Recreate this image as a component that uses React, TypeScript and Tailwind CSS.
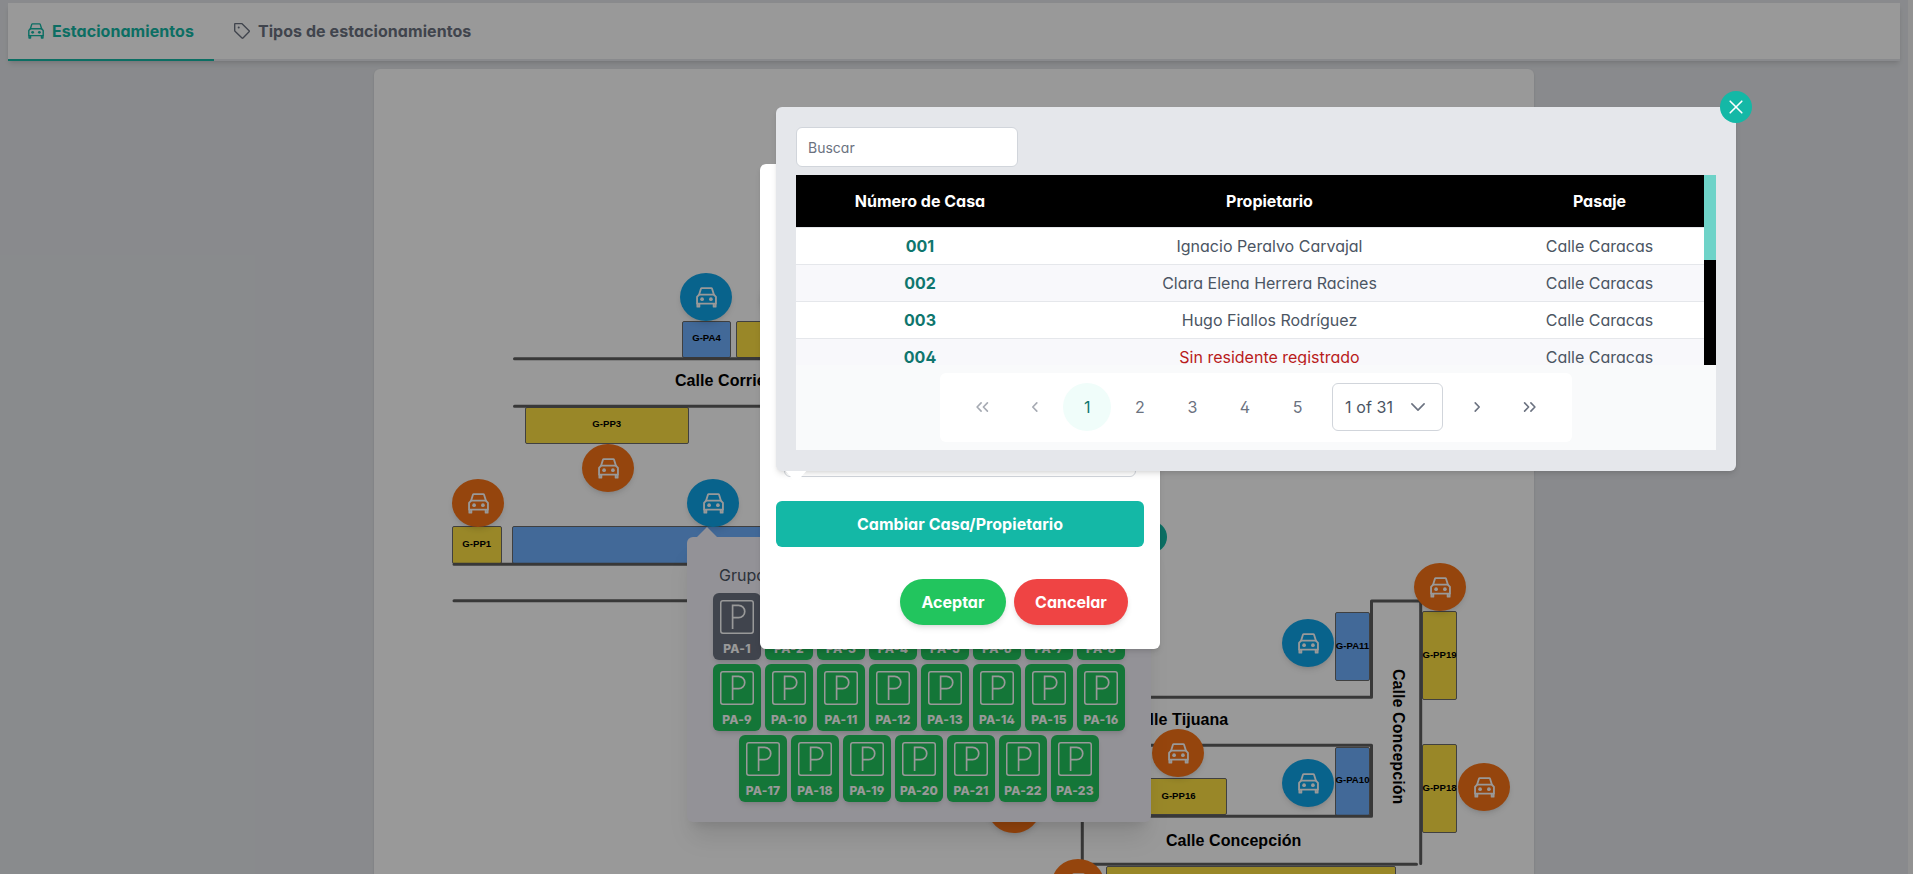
import React from "react";

const interVar = "font-['Inter',sans-serif] [font-feature-settings:'cv02','cv03','cv04','cv11']";

function CarIcon({ className }: { className: string }) {
  return (
    <svg viewBox="0 0 20 20" className={className} fill="none" stroke="currentColor" strokeWidth="1.75" strokeLinejoin="round" strokeLinecap="round">
      <path d="M3 7.2 4.7 1.7Q4.9 1.1 5.5 1.1h9q.6 0 .8.6L17 7.2" />
      <path d="M3 7.2h14L19 9.4v6.4H1V9.4Z" />
      <path d="M1.3 16v2.7h1.9V16M16.8 16v2.7h1.9V16" />
      <circle cx="5.8" cy="11.6" r="1.75" fill="currentColor" stroke="none" />
      <circle cx="14.2" cy="11.6" r="1.75" fill="currentColor" stroke="none" />
    </svg>
  );
}

function TagIcon() {
  return (
    <svg viewBox="0 0 16 16" className="size-4" fill="none" stroke="currentColor" strokeWidth="1.35" strokeLinejoin="round">
      <path d="M.7 1.1Q.7.6 1.2.6H7.6Q8 .6 8.3.9L15.1 7.7Q15.6 8.2 15.1 8.7L9 15Q8.5 15.5 8 15L1 8.2Q.7 7.9.7 7.5Z" />
      <circle cx="4.7" cy="4.5" r="1" fill="currentColor" stroke="none" />
    </svg>
  );
}

function ParkingIcon() {
  return (
    <svg viewBox="0 0 34 34" className="size-[34px]" fill="none" stroke="currentColor" strokeWidth="1.5">
      <rect x="0.75" y="0.75" width="32.5" height="32.5" rx="2.2" />
      <path d="M12.6 29V5.4h6a6 6 0 0 1 0 12.3h-6" strokeWidth="1.7" />
    </svg>
  );
}

function Chevron({ double = false, left = false }: { double?: boolean; left?: boolean }) {
  return (
    <svg viewBox="0 0 14 14" className={left ? "size-3.5 rotate-180" : "size-3.5"} fill="none" stroke="currentColor" strokeWidth="1.6" strokeLinecap="round" strokeLinejoin="round">
      {double ? <path d="M1.6 2.9 5.6 7l-4 4.1M7.9 2.9 11.9 7l-4 4.1" /> : <path d="M5.2 2.9 9.2 7l-4 4.1" />}
    </svg>
  );
}

const markers: { place: string; tone: string }[] = [
  { place: "left-[306px] top-[204px]", tone: "bg-[#0ea5e9]" },
  { place: "left-[386px] top-[204px]", tone: "bg-[#f97316]" },
  { place: "left-[208px] top-[375px]", tone: "bg-[#f97316]" },
  { place: "left-[78px] top-[410px]", tone: "bg-[#f97316]" },
  { place: "left-[313px] top-[410px]", tone: "bg-[#0ea5e9]" },
  { place: "left-[1040px] top-[494px]", tone: "bg-[#f97316]" },
  { place: "left-[908px] top-[550px]", tone: "bg-[#0ea5e9]" },
  { place: "left-[778px] top-[660px]", tone: "bg-[#f97316]" },
  { place: "left-[908px] top-[690px]", tone: "bg-[#0ea5e9]" },
  { place: "left-[1084px] top-[694px]", tone: "bg-[#f97316]" },
  { place: "left-[614px] top-[716px]", tone: "bg-[#f97316]" },
  { place: "left-[678px] top-[790px]", tone: "bg-[#f97316]" },
];

const zones: { label: string; place: string; tone: string }[] = [
  { label: "G-PA4", place: "left-[308px] top-[251.5px] w-[49px] h-[37px]", tone: "bg-[#6eaffd]" },
  { label: "", place: "left-[362px] top-[251.5px] w-[110px] h-[37px]", tone: "bg-[#ffe244]" },
  { label: "G-PP3", place: "left-[150.5px] top-[337.5px] w-[164.5px] h-[37px]", tone: "bg-[#ffe244]" },
  { label: "G-PP1", place: "left-[78px] top-[457px] w-[49.5px] h-[37.5px]", tone: "bg-[#ffe244]" },
  { label: "", place: "left-[138px] top-[457px] w-[370px] h-[37.5px]", tone: "bg-[#6eaffd]" },
  { label: "G-PA11", place: "left-[961px] top-[543px] w-[35px] h-[69px]", tone: "bg-[#6eaffd]" },
  { label: "G-PP19", place: "left-[1048px] top-[542px] w-[35px] h-[89px]", tone: "bg-[#ffe244]" },
  { label: "G-PP16", place: "left-[756px] top-[709px] w-[97px] h-[37px]", tone: "bg-[#ffe244]" },
  { label: "G-PA10", place: "left-[961px] top-[677.5px] w-[35px] h-[69px]", tone: "bg-[#6eaffd]" },
  { label: "G-PP18", place: "left-[1048px] top-[675px] w-[35px] h-[89px]", tone: "bg-[#ffe244]" },
  { label: "", place: "left-[732px] top-[797px] w-[290px] h-[37px]", tone: "bg-[#ffe244]" },
];

const streets: { name: string; place: string }[] = [
  { name: "Calle Corrientes", place: "left-[301px] top-[301px]" },
  { name: "Calle Tijuana", place: "left-[755px] top-[640px]" },
  { name: "Calle Concepción", place: "left-[792px] top-[761px]" },
  { name: "Calle Concepción", place: "left-[1013px] top-[600px] [writing-mode:vertical-rl]" },
];

function Slot({ n }: { n: number }) {
  return (
    <div className={`flex h-[67px] w-12 flex-col items-center rounded-md pt-[6.5px] text-white shadow-md ${n === 1 ? "bg-[#6b7280]" : "bg-[#22c55e]"}`}>
      <ParkingIcon />
      <span className="mt-[7px] text-[12px] leading-4 font-extrabold tracking-[0.2px] whitespace-nowrap">PA-{n}</span>
    </div>
  );
}

function SlotRow({ from, count }: { from: number; count: number }) {
  return (
    <div className="flex justify-center gap-1">
      {Array.from({ length: count }, (_, i) => (
        <Slot key={i} n={from + i} />
      ))}
    </div>
  );
}

function GroupPanel() {
  return (
    <div className="absolute left-[313px] top-[468px] h-[285px] w-[464px] rounded-md bg-[#f6f4fc] px-[26px] shadow-xl">
      <span className="absolute -top-2.5 left-2.5 size-0 border-x-10 border-b-10 border-x-transparent border-b-[#f6f4fc]" />
      <p className="mt-[26px] ml-1.5 h-[30px] text-base leading-6 text-[#4b5563]">Grupo G-PA1</p>
      <div className="flex flex-col gap-1">
        <SlotRow from={1} count={8} />
        <SlotRow from={9} count={8} />
        <SlotRow from={17} count={7} />
      </div>
      <CloseButton />
    </div>
  );
}

function CloseButton() {
  return (
    <button className="absolute -top-4 -right-4 flex size-8 items-center justify-center rounded-full bg-[#14b8a6] text-white">
      <svg viewBox="0 0 14 14" className="size-3.5" stroke="currentColor" strokeWidth="1.6" strokeLinecap="round">
        <path d="M1.2 1.2 12.8 12.8M12.8 1.2 1.2 12.8" />
      </svg>
    </button>
  );
}

function ParkingMap() {
  return (
    <div className="relative mx-auto mt-2 h-[860px] w-[1160px] rounded-md bg-white shadow-sm">
      {zones.map((z, i) => (
        <div key={i} className={`absolute flex items-center justify-center rounded-[2px] border border-[#6b6b6b] pb-[1.5px] font-['Liberation_Sans',sans-serif] text-[9.6px] leading-none font-bold whitespace-nowrap text-black ${z.place} ${z.tone}`}>
          {z.label}
        </div>
      ))}
      <svg className="absolute top-0 left-0" width="1160" height="805" fill="none" stroke="#5e5e5e" strokeWidth="3" strokeLinecap="round" strokeLinejoin="round">
        <path d="M140.5 289.8H500M140.5 337.3H500M80 495.3H500M80 531.7H500" />
        <path d="M640 628.3H997.5V532H1046.7V794.5" />
        <path d="M708 676.3H997.5V747.2H708.3V795.3H1042.5" />
      </svg>
      {streets.map((s, i) => (
        <span key={i} className={`absolute font-['Liberation_Sans',sans-serif] text-base leading-[22px] font-bold tracking-[0.07px] whitespace-nowrap text-black ${s.place}`}>
          {s.name}
        </span>
      ))}
      {markers.map((m, i) => (
        <div key={i} className={`absolute flex h-12 w-[52px] items-center justify-center rounded-[50%] text-white shadow-md ${m.place} ${m.tone}`}>
          <CarIcon className="mt-px size-[21px]" />
        </div>
      ))}
      <GroupPanel />
    </div>
  );
}

function EditDialog() {
  return (
    <div className="absolute top-[164px] left-[760px] flex h-[485px] w-[400px] flex-col justify-end rounded-md bg-white px-4 pb-6 shadow-md">
      <div className="mx-2 h-12 rounded-md border border-[#d1d5db]" />
      <button className="mt-6 h-[46px] rounded-md bg-[#14b8a6] text-base font-bold tracking-[0.06px] text-white">Cambiar Casa/Propietario</button>
      <div className="mt-8 flex justify-end gap-2 pr-4">
        <button className="h-[46px] w-[106px] rounded-full bg-[#22c55e] text-base font-bold text-white shadow-md">Aceptar</button>
        <button className="h-[46px] w-[114px] rounded-full bg-[#ef4444] text-base font-bold text-white shadow-md">Cancelar</button>
      </div>
    </div>
  );
}

const houses = [
  ["001", "Ignacio Peralvo Carvajal", "Calle Caracas"],
  ["002", "Clara Elena Herrera Racines", "Calle Caracas"],
  ["003", "Hugo Fiallos Rodríguez", "Calle Caracas"],
  ["004", "Sin residente registrado", "Calle Caracas"],
];

function Paginator() {
  const button = "flex size-12 items-center justify-center rounded-full";
  return (
    <div className="mx-auto mt-2 flex h-[69px] w-[632px] items-center rounded-md bg-white pb-px pl-[18px] text-base text-[#6b7280]">
      <div className="flex gap-[4.6px]">
        <span className={`${button} opacity-60`}><Chevron double left /></span>
        <span className={`${button} opacity-60`}><Chevron left /></span>
        <span className={`${button} bg-[#f0fdfa] text-[#0f766e]`}>1</span>
        <span className={button}>2</span>
        <span className={button}>3</span>
        <span className={button}>4</span>
        <span className={button}>5</span>
      </div>
      <div className="ml-[10.5px] flex h-12 w-[111px] items-center justify-between rounded-md border border-[#d1d5db] pr-[17px] pl-3 text-[#4b5563]">
        <span className="pb-px tracking-[0.1px] whitespace-nowrap">1 of 31</span>
        <svg viewBox="0 0 14 14" className="size-3.5 text-[#6b7280]" fill="none" stroke="currentColor" strokeWidth="1.6" strokeLinecap="round" strokeLinejoin="round">
          <path d="M.9 3.9 7 10.1l6.1-6.2" />
        </svg>
      </div>
      <div className="ml-2.5 flex gap-[4.6px]">
        <span className={button}><Chevron /></span>
        <span className={button}><Chevron double /></span>
      </div>
    </div>
  );
}

function HousePicker() {
  const columns = "grid grid-cols-[248px_451px_209px] text-center";
  return (
    <div className="absolute top-[107px] left-[776px] h-[364px] w-[960px] rounded-md bg-[#e5e7eb] p-5 shadow-md">
      <span className="absolute top-[362px] left-2 size-0 border-x-12 border-t-14 border-x-transparent border-t-white [clip-path:inset(2px_0_0_0)]" />
      <CloseButton />
      <input placeholder="Buscar" className="block h-10 w-[222px] rounded-md border border-[#d1d5db] bg-white px-[11px] pt-px text-sm placeholder:text-[#6b7280]" />
      <div className="mt-2 flex h-[190px] overflow-hidden">
        <div className="w-[908px]">
          <div className={`${columns} h-[53px] items-center border-b border-[#e5e7eb] bg-black text-base font-bold text-white`}>
            <span>Número de Casa</span>
            <span>Propietario</span>
            <span>Pasaje</span>
          </div>
          {houses.map(([num, owner, street], i) => (
            <div key={num} className={`${columns} h-[37px] items-center border-b border-[#e5e7eb] text-base text-[#4b5563] ${i % 2 ? "bg-[#f8f8fb]" : "bg-white"}`}>
              <span className="font-bold text-[#0f766e]">{num}</span>
              <span className={i === 3 ? "text-[#b91c1c]" : ""}>{owner}</span>
              <span>{street}</span>
            </div>
          ))}
        </div>
        <div className="w-3 bg-black">
          <div className="h-[85px] bg-[#6ed3c8]" />
        </div>
      </div>
      <div className="h-[85px] overflow-hidden bg-[#f9fafb]">
        <Paginator />
      </div>
    </div>
  );
}

export default function App() {
  return (
    <div className={`relative h-[874px] w-full overflow-hidden bg-[#f4f4f4] ${interVar}`}>
      <div className="mr-[5px] h-full bg-[#e5e7eb] pt-[3px] pr-2 pl-2">
        <nav className="flex h-[58px] bg-white text-base font-bold tracking-[0.06px] shadow-md">
          <a className="flex items-center gap-2 border-b-2 border-[#14b8a6] px-5 text-[#14b8a6]">
            <CarIcon className="size-4" />
            Estacionamientos
          </a>
          <a className="flex items-center gap-2 border-b-2 border-[#e5e7eb] px-5 text-[#6b7280]">
            <TagIcon />
            Tipos de estacionamientos
          </a>
          <span className="grow border-b-2 border-[#e5e7eb]" />
        </nav>
        <ParkingMap />
      </div>
      <div className="absolute inset-0 bg-black/40" />
      <EditDialog />
      <HousePicker />
    </div>
  );
}
